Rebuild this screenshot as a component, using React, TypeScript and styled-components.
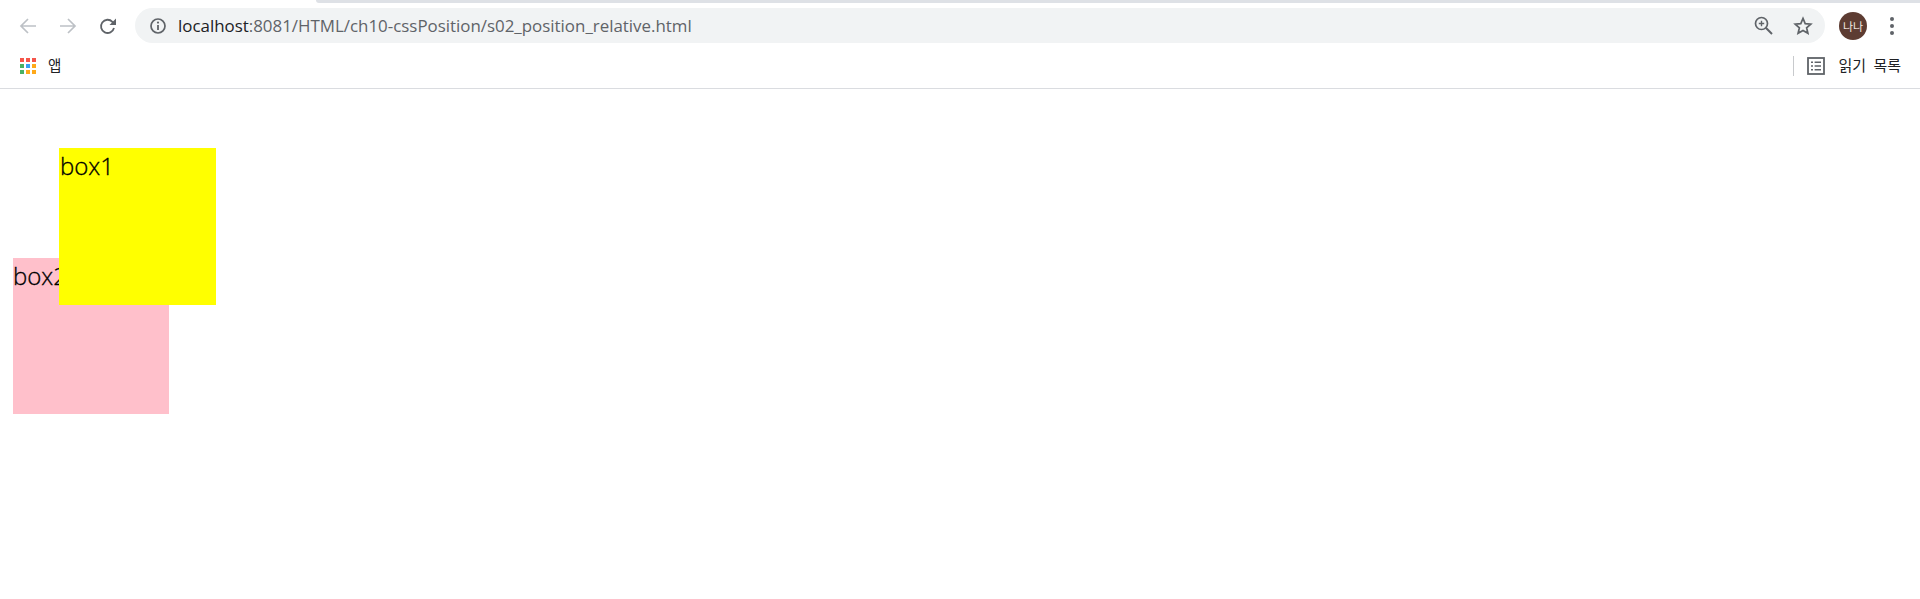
import * as React from 'react';
import styled, { createGlobalStyle } from 'styled-components';

const GlobalStyle = createGlobalStyle`
  html, body {
    margin: 0;
    padding: 0;
    background: #fff;
  }
`;

const UI_FONT = `"Open Sans", "Noto Sans CJK KR", sans-serif`;
const KR_FONT = `"Noto Sans CJK KR", "Noto Sans", sans-serif`;

const APP_COLORS = ['#f44336', '#f44336', '#f44336', '#34a853', '#2196f3', '#ffa000', '#34a853', '#ffa000', '#ffa000'];

export default function App() {
  return (
    <>
      <GlobalStyle />
      <Browser>
        <TabStrip>
          <ActiveTab />
          <InactiveArea />
        </TabStrip>
        <Toolbar>
          <NavIcon>
            <svg width="18" height="18" viewBox="0 0 18 18" fill="none" stroke="#bdc1c6" strokeWidth="1.7">
              <path d="M17 9H2M9 2 2 9l7 7" />
            </svg>
          </NavIcon>
          <NavIcon>
            <svg width="18" height="18" viewBox="0 0 18 18" fill="none" stroke="#bdc1c6" strokeWidth="1.7">
              <path d="M1 9h15M9 2l7 7-7 7" />
            </svg>
          </NavIcon>
          <NavIcon>
            <svg width="18" height="18" viewBox="0 0 18 18" fill="none">
              <path d="M15 11a6.6 6.6 0 1 1-1.6-6.2L15 6.5" stroke="#5f6368" strokeWidth="1.8" />
              <path d="M17 1.5V8h-6.5z" fill="#5f6368" />
            </svg>
          </NavIcon>
          <Omnibox>
            <svg width="18" height="18" viewBox="0 0 18 18" fill="none">
              <circle cx="9" cy="9" r="7" stroke="#5f6368" strokeWidth="1.7" />
              <path d="M9 8v5" stroke="#5f6368" strokeWidth="1.8" />
              <circle cx="9" cy="5.6" r="1.1" fill="#5f6368" />
            </svg>
            <Url>
              <UrlHost>localhost</UrlHost>:8081/HTML/ch10-cssPosition/s02_position_relative.html
            </Url>
            <OmniActions>
              <svg width="19" height="19" viewBox="0 0 19 19" fill="none" stroke="#5f6368">
                <circle cx="7.5" cy="7.5" r="6" strokeWidth="1.7" />
                <path d="M11.8 11.8 18 18" strokeWidth="2" />
                <path d="M7.5 4.8v5.4M4.8 7.5h5.4" strokeWidth="1.4" />
              </svg>
              <svg width="20" height="20" viewBox="0 0 20 20" fill="none">
                <path d="m10 2.4 2.2 5.2 5.6.5-4.2 3.7 1.3 5.5L10 14.4l-4.9 2.9 1.3-5.5-4.2-3.7 5.6-.5z" stroke="#5f6368" strokeWidth="1.7" strokeLinejoin="miter" />
              </svg>
            </OmniActions>
          </Omnibox>
          <Avatar>나나</Avatar>
          <MenuDots>
            <Dot />
            <Dot />
            <Dot />
          </MenuDots>
        </Toolbar>
        <BookmarkBar>
          <AppsGrid>
            {APP_COLORS.map((color, i) => (
              <AppDot key={i} color={color} />
            ))}
          </AppsGrid>
          <BookmarkLabel>앱</BookmarkLabel>
          <Spacer />
          <Divider />
          <svg width="18" height="18" viewBox="0 0 18 18" fill="none">
            <rect x="1" y="1" width="16" height="16" stroke="#5f6368" strokeWidth="1.8" />
            <path d="M4 5.2h2M4 9h2M4 12.8h2M7.6 5.2h6.4M7.6 9h6.4M7.6 12.8h6.4" stroke="#5f6368" strokeWidth="1.5" />
          </svg>
          <ReadingLabel>읽기 목록</ReadingLabel>
        </BookmarkBar>
        <Page>
          <Box1>box1</Box1>
          <Box2>box2</Box2>
        </Page>
      </Browser>
    </>
  );
}

const Browser = styled.div`
  width: 1920px;
  height: 599px;
  overflow: hidden;
  display: flex;
  flex-direction: column;
  background: #fff;
`;

const TabStrip = styled.div`
  display: flex;
  height: 3px;
  flex: none;
`;

const ActiveTab = styled.div`
  width: 316px;
  background: #fff;
`;

const InactiveArea = styled.div`
  flex: 1;
  background: #dee1e6;
  border-bottom-left-radius: 6px;
`;

const Toolbar = styled.div`
  display: flex;
  align-items: center;
  height: 41px;
  flex: none;
  padding: 4px 0 0 19px;
  box-sizing: border-box;
`;

const NavIcon = styled.div`
  display: flex;
  width: 40px;
  flex: none;
  svg {
    display: block;
  }
`;

const Omnibox = styled.div`
  display: flex;
  align-items: center;
  width: 1690px;
  height: 35px;
  margin-left: -4px;
  padding: 0 14px;
  box-sizing: border-box;
  border-radius: 18px;
  background: #f1f3f4;
`;

const Url = styled.div`
  margin-left: 11px;
  font-family: ${UI_FONT};
  font-size: 16.9px;
  color: #5f6368;
  white-space: nowrap;
`;

const UrlHost = styled.span`
  color: #202124;
`;

const OmniActions = styled.div`
  display: flex;
  align-items: center;
  gap: 20px;
  margin-left: auto;
  margin-right: -2px;
`;

const Avatar = styled.div`
  display: flex;
  align-items: center;
  justify-content: center;
  width: 28px;
  height: 28px;
  margin-left: 14px;
  border-radius: 50%;
  background: #5d3c32;
  color: #f3e9e4;
  font-family: ${KR_FONT};
  font-size: 11px;
`;

const MenuDots = styled.div`
  display: flex;
  flex-direction: column;
  gap: 3px;
  margin-left: 23px;
`;

const Dot = styled.span`
  width: 4px;
  height: 4px;
  border-radius: 50%;
  background: #5f6368;
`;

const BookmarkBar = styled.div`
  display: flex;
  align-items: center;
  height: 45px;
  flex: none;
  padding: 0 19px 0 20px;
  box-sizing: border-box;
  border-bottom: 1px solid #dadce0;
`;

const AppsGrid = styled.div`
  display: grid;
  grid-template-columns: repeat(3, 4px);
  grid-auto-rows: 4px;
  gap: 2px;
`;

const AppDot = styled.span<{ color: string }>`
  background: ${({ color }) => color};
  opacity: 0.9;
`;

const BookmarkLabel = styled.span`
  margin-left: 12px;
  margin-top: -4px;
  font-family: ${KR_FONT};
  font-size: 14.5px;
  color: #202124;
`;

const Spacer = styled.div`
  flex: 1;
`;

const Divider = styled.div`
  width: 1px;
  height: 20px;
  margin-right: 13px;
  background: #c8cacd;
`;

const ReadingLabel = styled.span`
  margin-left: 13px;
  margin-top: -4px;
  font-family: ${KR_FONT};
  font-size: 15px;
  word-spacing: 4px;
  color: #202124;
  white-space: nowrap;
`;

const Page = styled.div`
  flex: 1;
  padding: 13px 0 0 13px;
  font-family: "Open Sans", sans-serif;
  font-size: 24px;
  font-weight: 300;
  -webkit-text-stroke: 0.3px #000;
  line-height: 36px;
  color: #000;
`;

const Box1 = styled.div`
  position: relative;
  z-index: 1;
  left: 46px;
  top: 46px;
  width: 157px;
  height: 157px;
  margin-bottom: -1px;
  padding-left: 1px;
  box-sizing: border-box;
  background: #ffff00;
`;

const Box2 = styled.div`
  position: relative;
  width: 156px;
  height: 156px;
  background: #ffc0cb;
`;
